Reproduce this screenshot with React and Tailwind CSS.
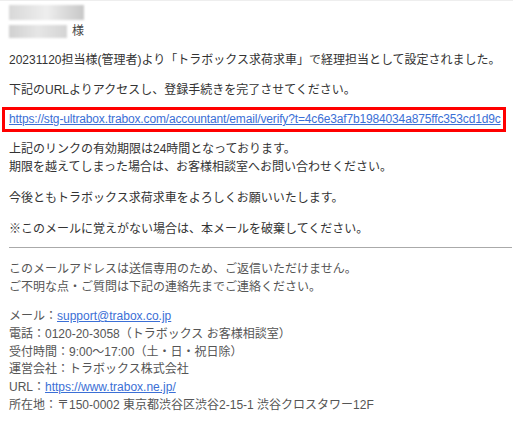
export default function App() {
  return (
    <div
      className="w-[513px] h-[426px] overflow-hidden bg-white border-t border-[#eeeeee] text-[12px] leading-[17.5px] text-[#333333]"
      style={{ fontFamily: '"Liberation Sans", "Noto Sans CJK JP", sans-serif' }}
    >
      <div className="pl-[9px] pr-[1px]">
        {/* blurred addressee */}
        <div className="mt-[4px] h-[15px] w-[75px] bg-gradient-to-r from-[#d8d8d8] via-[#eeeeee] to-[#c8c8c8] blur-[1px]" />
        <div className="mt-[4px] flex items-center h-[15px]">
          <div className="h-[13px] w-[58px] bg-gradient-to-r from-[#d0d0d0] via-[#e6e6e6] to-[#d4d4d4] blur-[1px]" />
          <span className="ml-[5px] text-[#444]">様</span>
        </div>

        <p className="mt-[13px]">
          20231120担当様(管理者)より「トラボックス求荷求車」で経理担当として設定されました。
        </p>
        <p className="mt-[12px]">下記のURLよりアクセスし、登録手続きを完了させてください。</p>

        <div className="mt-[8px] -ml-[7px] w-[504px] border-[3px] border-[#ff0000] pl-[4px] py-[1px] leading-[17px] whitespace-nowrap overflow-hidden">
          <a href="#" className="text-[#3b6fd6] underline tracking-[-0.15px]">
            https://stg-ultrabox.trabox.com/accountant/email/verify?t=4c6e3af7b1984034a875ffc353cd1d9c
          </a>
        </div>

        <p className="mt-[9px]">
          上記のリンクの有効期限は24時間となっております。
          <br />
          期限を越えてしまった場合は、お客様相談室へお問い合わせください。
        </p>
        <p className="mt-[14px]">今後ともトラボックス求荷求車をよろしくお願いいたします。</p>
        <p className="mt-[13px]">※このメールに覚えがない場合は、本メールを破棄してください。</p>

        <hr className="mt-[9px] border-t border-[#aaaaaa]" />

        <div className="text-[#555555]">
          <p className="mt-[13px]">
            このメールアドレスは送信専用のため、ご返信いただけません。
            <br />
            ご不明な点・ご質問は下記の連絡先までご連絡ください。
          </p>
          <div className="mt-[12px] leading-[17.8px]">
            <div>
              メール：<a href="#" className="text-[#3b6fd6] underline">support@trabox.co.jp</a>
            </div>
            <div>電話：0120-20-3058（トラボックス お客様相談室）</div>
            <div>受付時間：9:00～17:00（土・日・祝日除）</div>
            <div>運営会社：トラボックス株式会社</div>
            <div>
              URL：<a href="#" className="text-[#3b6fd6] underline">https://www.trabox.ne.jp/</a>
            </div>
            <div>所在地：〒150-0002 東京都渋谷区渋谷2-15-1 渋谷クロスタワー12F</div>
          </div>
        </div>
      </div>
    </div>
  );
}
